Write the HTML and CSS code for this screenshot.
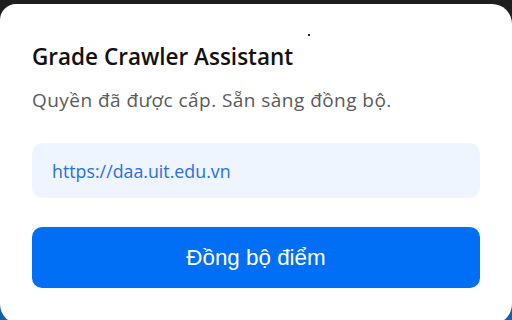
FILE: index.html
```html
<!DOCTYPE html>
<html lang="vi">
<head>
<meta charset="utf-8">
<link rel="stylesheet" href="styles.css">
</head>
<body>
<div class="panel">
  <span class="speck"></span>
  <h1 class="title">Grade Crawler Assistant</h1>
  <p class="status">Quyền đã được cấp. Sẵn sàng đồng bộ.</p>
  <div class="url">https://daa.uit.edu.vn</div>
  <button class="sync">Đồng bộ điểm</button>
</div>
</body>
</html>
```
FILE: styles.css
```css
html, body {
  margin: 0;
  padding: 0;
  width: 512px;
  height: 320px;
  overflow: hidden;
}
body {
  background: linear-gradient(to bottom, #1e1e1e 0%, #2a2a2a 30%, #173f6e 75%, #1460a8 100%);
}
.panel {
  position: relative;
  box-sizing: border-box;
  margin-top: 4px;
  height: 320px;
  background: #ffffff;
  border-radius: 16px 20px 20px 20px;
  padding: 39px 32px 0 32px;
  display: flex;
  flex-direction: column;
  font-family: "Open Sans", "Noto Sans", sans-serif;
}
.speck {
  position: absolute;
  left: 308px;
  top: 30px;
  width: 2px;
  height: 2px;
  background: #222;
}
.title {
  margin: 0;
  font-size: 22.5px;
  font-weight: 600;
  line-height: 28px;
  color: #111111;
  letter-spacing: 0;
}
.status {
  margin: 16px 0 0 0;
  font-size: 19px;
  line-height: 26px;
  color: #5a5a5a;
  letter-spacing: 0.45px;
}
.url {
  margin-top: 30px;
  height: 55px;
  box-sizing: border-box;
  background: #eff5ff;
  border-radius: 10px;
  padding: 0 20px;
  display: flex;
  align-items: center;
  font-size: 17.8px;
  color: #2a6ee0;
}
.sync {
  margin-top: 29px;
  height: 61px;
  border: none;
  border-radius: 10px;
  background: #006ff5;
  color: #ffffff;
  font-family: "Liberation Sans", Arial, sans-serif;
  font-size: 22.4px;
  padding: 0;
}
```
